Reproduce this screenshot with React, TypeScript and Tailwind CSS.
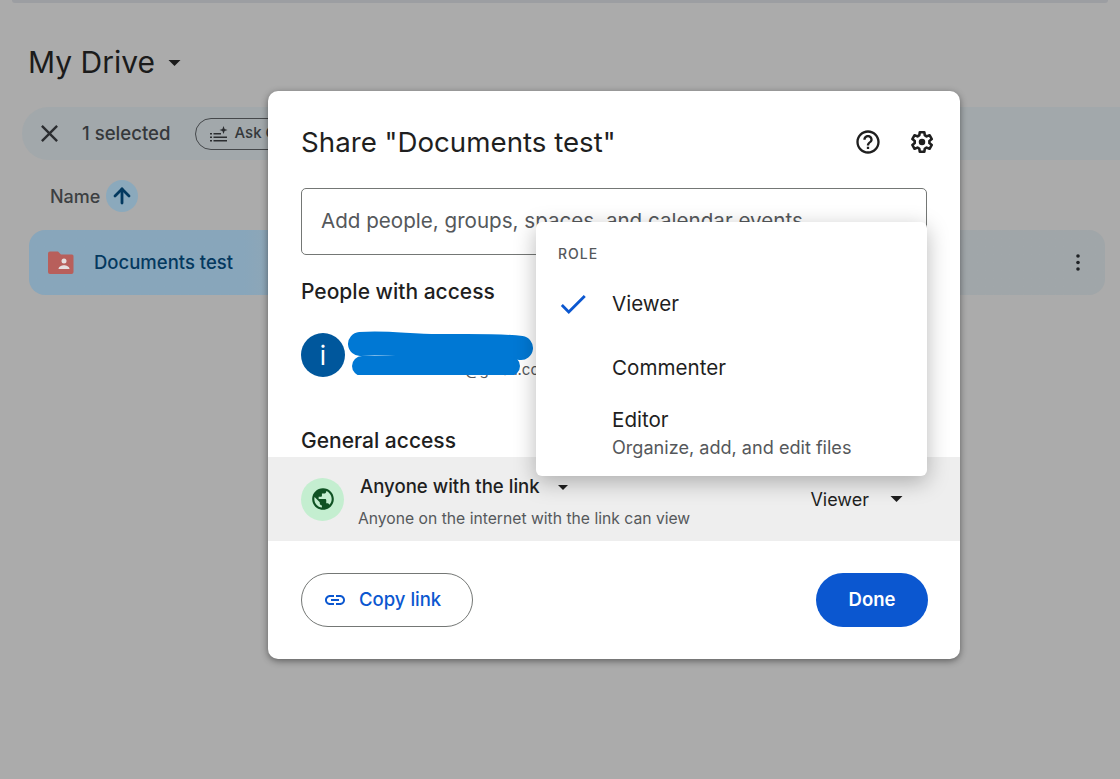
import { ArrowUp } from 'lucide-react'

function Caret({ className }: { className: string }) {
  return (
    <svg className={className} viewBox="0 0 10 5" fill="currentColor">
      <path d="M0 0h10L5 5z" />
    </svg>
  )
}

// material style icons, the lucide ones are too rounded for these
function Icon({ d, className }: { d: string; className: string }) {
  return (
    <svg className={className} viewBox="0 0 24 24" fill="currentColor">
      <path d={d} />
    </svg>
  )
}

const icons = {
  close: 'M19 6.410 17.590 5 12 10.590 6.410 5 5 6.410 10.590 12 5 17.590 6.410 19 12 13.410 17.590 19 19 17.590 13.410 12z',
  check: 'M9 16.170 4.830 12l-1.420 1.410L9 19 21 7l-1.410-1.410z',
  help: 'M11 18h2v-2h-2v2zm1-16C6.480 2 2 6.480 2 12s4.480 10 10 10 10-4.480 10-10S17.520 2 12 2zm0 18c-4.410 0-8-3.590-8-8s3.590-8 8-8 8 3.590 8 8-3.590 8-8 8zm0-14c-2.210 0-4 1.790-4 4h2c0-1.100.9-2 2-2s2 .9 2 2c0 2-3 1.750-3 5h2c0-2.250 3-2.500 3-5 0-2.210-1.790-4-4-4z',
  link: 'M3.900 12c0-1.710 1.390-3.100 3.100-3.100h4V7H7c-2.760 0-5 2.240-5 5s2.240 5 5 5h4v-1.900H7c-1.710 0-3.100-1.390-3.100-3.100zM8 13h8v-2H8v2zm9-6h-4v1.900h4c1.710 0 3.100 1.390 3.100 3.100s-1.390 3.100-3.100 3.100h-4V17h4c2.760 0 5-2.240 5-5s-2.240-5-5-5z',
  globe: 'M12 2C6.480 2 2 6.480 2 12s4.480 10 10 10 10-4.480 10-10S17.520 2 12 2zm-1 17.930c-3.950-.49-7-3.850-7-7.930 0-.62.08-1.210.21-1.790L9 15v1c0 1.100.9 2 2 2v1.930zm6.900-2.540c-.26-.81-1-1.390-1.900-1.390h-1v-3c0-.55-.45-1-1-1H8v-2h2c.55 0 1-.45 1-1V7h2c1.100 0 2-.9 2-2v-.41c2.930 1.190 5 4.060 5 7.410 0 2.080-.8 3.970-2.100 5.390z',
}

function Gear() {
  return (
    <svg className="size-[28px] text-[#1f1f1f]" viewBox="0 0 24 24" fill="none" stroke="currentColor" strokeWidth="2.200" strokeLinejoin="round">
      <path d="M18.300 12.900c.04-.3.06-.6.06-.9s-.02-.6-.07-.9l2.100-1.600-1.900-3.300-2.500 1c-.5-.38-1-.7-1.600-.94L14 3.600h-3.900l-.38 2.660c-.6.24-1.100.56-1.600.94l-2.500-1-1.900 3.300 2.100 1.600c-.05.3-.08.6-.08.9s.03.6.08.9l-2.100 1.600 1.900 3.300 2.500-1c.5.38 1 .7 1.600.94l.38 2.660H14l.38-2.660c.6-.24 1.100-.56 1.600-.94l2.500 1 1.900-3.300z" />
      <circle cx="12" cy="12" r="2.800" fill="currentColor" stroke="none" />
    </svg>
  )
}

function SharedFolder() {
  return (
    <svg className="size-[32px] text-[#b85f5b]" viewBox="0 0 32 32" fill="currentColor">
      <path d="M3 6.500A2 2 0 0 1 5 4.500h8l3 3h11a1.500 1.500 0 0 1 1.500 1.500v16a2 2 0 0 1-2 2H5a2 2 0 0 1-2-2z" />
      <circle cx="19" cy="14" r="2.500" fill="#e6dede" />
      <path d="M13.500 22c0-2.600 3.300-3.800 5.500-3.800s5.500 1.200 5.500 3.800z" fill="#e6dede" />
    </svg>
  )
}

function AskIcon() {
  return (
    <svg className="size-[18px] shrink-0 text-[#2b2d30]" viewBox="0 0 18 18" fill="currentColor">
      <path d="M0 8h2v1.500H0zM0 11.500h2V13H0zM0 15h2v1.500H0zM3.500 8H11v1.500H3.500zM3.500 11.500H17V13H3.500zM3.500 15H17v1.500H3.500z" />
      <path d="M13.500 1l1.100 2.900 2.900 1.100-2.900 1.100-1.100 2.900-1.100-2.900-2.900-1.100 2.900-1.100z" />
    </svg>
  )
}

function Background() {
  return (
    <div className="h-full bg-[#ababab] pt-[41px] text-[#1b1b1b]">
      <div className="absolute inset-x-[12px] top-0 h-[3px] rounded-b bg-[#9c9ea2]" />
      <div className="flex h-[42px] items-center pl-[28px]">
        <span className="text-[30px] leading-[42px]">My Drive</span>
        <Caret className="ml-[13px] mt-[2px] h-[6px] w-[13px]" />
      </div>
      <div className="ml-[22px] mt-[24px] flex h-[53px] items-center rounded-l-[27px] bg-[#a2a8ab] pl-[13px]">
        <Icon d={icons.close} className="size-[29px] text-[#2b2d30]" />
        <span className="ml-[18px] text-[18.600px] font-medium text-[#35383b]">1 selected</span>
        <div className="ml-[24px] flex h-[32px] w-[90px] items-center gap-[7px] whitespace-nowrap rounded-l-full border border-[#45484b] pl-[14px] text-[15px] font-medium text-[#35383b]">
          <AskIcon />
          <span>Ask G</span>
        </div>
      </div>
      <div className="mt-[20px] flex h-[32px] items-center pl-[50px]">
        <span className="text-[18px] font-medium text-[#3c3f42]">Name</span>
        <span className="ml-[6px] grid size-[32px] place-items-center rounded-full bg-[#8ba9bc]">
          <ArrowUp className="size-[24px] text-[#03395f]" strokeWidth={2.8} />
        </span>
      </div>
      <div className="ml-[29px] mr-[15px] mt-[18px] flex h-[65px] items-center rounded-[16px] bg-[#a0a6a9] bg-gradient-to-r from-[#88a6bb] from-20% to-[#a0a6a9] to-30% pl-[16px] pr-[25px]">
        <SharedFolder />
        <span className="ml-[17px] text-[18.500px] font-medium text-[#04395f]">Documents test</span>
        <svg className="ml-auto h-[17px] w-[4px] text-[#1f2225]" viewBox="0 0 4 17" fill="currentColor">
          <circle cx="2" cy="2" r="1.800" />
          <circle cx="2" cy="8.500" r="1.800" />
          <circle cx="2" cy="15" r="1.800" />
        </svg>
      </div>
    </div>
  )
}

function RoleMenu() {
  return (
    <div className="absolute left-[268px] top-[131px] z-10 h-[254px] w-[391px] rounded-[6px] bg-white shadow-[0_6px_22px_rgba(0,0,0,0.28)]">
      <div className="pl-[22px] pt-[23px] text-[14px] leading-[18px] font-medium tracking-[1px] text-[#55585b]">ROLE</div>
      <div className="mt-[21px] flex h-[40px] items-center pl-[20px] text-[20.600px] text-[#1f1f1f]">
        <Icon d={icons.check} className="size-[34px] shrink-0 text-[#0b57d0]" />
        <span className="ml-[22px]">Viewer</span>
      </div>
      <div className="mt-[24px] h-[40px] pl-[76px] text-[20.600px] leading-[40px] text-[#1f1f1f]">Commenter</div>
      <div className="mt-[18px] pl-[76px] text-[20.600px] leading-[28px] text-[#1f1f1f]">Editor</div>
      <div className="pl-[76px] text-[18.100px] leading-[26px] text-[#55585b]">Organize, add, and edit files</div>
    </div>
  )
}

function Redaction() {
  return (
    <svg className="absolute left-[80px] top-[-2px] h-[44px] w-[186px]" viewBox="0 0 186 44" fill="none" stroke="#0078d4" strokeLinecap="round">
      <path d="M12 13C40 11 60 15 90 15S150 14 173 17" strokeWidth="24" />
      <path d="M14 35H162" strokeWidth="20" />
    </svg>
  )
}

function ShareDialog() {
  return (
    <div className="absolute left-[268px] top-[91px] h-[568px] w-[692px] rounded-[10px] bg-white text-[#1f1f1f] shadow-[0_2px_7px_rgba(0,0,0,0.45)]">
      <div className="flex h-[97px] items-center pl-[33px] pr-[24px]">
        <h1 className="mt-[5px] text-[27.700px] leading-[36px]">Share "Documents test"</h1>
        <span className="ml-auto mt-[5px] flex items-center gap-[26px]">
          <Icon d={icons.help} className="size-[28px] text-[#1f1f1f]" />
          <Gear />
        </span>
      </div>
      <div className="mx-[33px] flex h-[67px] w-[626px] items-center rounded-[5px] border border-[#747775] pl-[19px] text-[20.600px] text-[#55585b]">
        Add people, groups, spaces, and calendar events
      </div>
      <div className="mt-[21px] px-[33px] text-[21px] leading-[32px] font-medium">People with access</div>
      <div className="relative mt-[25px] flex h-[44px] items-center px-[33px]">
        <span className="grid size-[44px] place-items-center rounded-full bg-[#00579c] text-[26px] text-white">i</span>
        <span className="absolute left-[197px] top-[27px] text-[15px] leading-[20px] text-[#55585b]">@gmail.com</span>
        <Redaction />
      </div>
      <div className="mt-[48px] px-[33px] text-[21px] leading-[32px] font-medium">General access</div>
      <div className="flex h-[84px] items-center bg-[#eeeeee] pl-[33px] pr-[57px]">
        <span className="grid size-[43px] place-items-center rounded-full bg-[#c4eed0]">
          <Icon d={icons.globe} className="size-[26px] text-[#0f5223]" />
        </span>
        <div className="ml-[14px] mt-[5px]">
          <div className="ml-[2px] flex items-center text-[18.600px] leading-[24px] font-medium">
            Anyone with the link
            <Caret className="ml-[17px] mt-[2px] h-[5px] w-[12px]" />
          </div>
          <div className="mt-[11px] text-[15.700px] leading-[20px] text-[#55585b]">Anyone on the internet with the link can view</div>
        </div>
        <span className="ml-auto text-[18px]">Viewer</span>
        <Caret className="ml-[21px] h-[6px] w-[13px]" />
      </div>
      <div className="flex items-center justify-between pl-[33px] pr-[32px] pt-[32px]">
        <div className="flex h-[54px] w-[172px] items-center gap-[12px] rounded-full border border-[#747775] pl-[21px] text-[18.500px] font-medium text-[#0b57d0]">
          <Icon d={icons.link} className="size-[24px]" />
          Copy link
        </div>
        <div className="grid h-[54px] w-[112px] place-items-center rounded-full bg-[#0b57d0] text-[18.500px] font-semibold text-white">Done</div>
      </div>
      <RoleMenu />
    </div>
  )
}

export default function App() {
  return (
    <div className="relative h-[779px] w-[1120px] overflow-hidden font-['Inter','Liberation_Sans',sans-serif]">
      <Background />
      <ShareDialog />
    </div>
  )
}
